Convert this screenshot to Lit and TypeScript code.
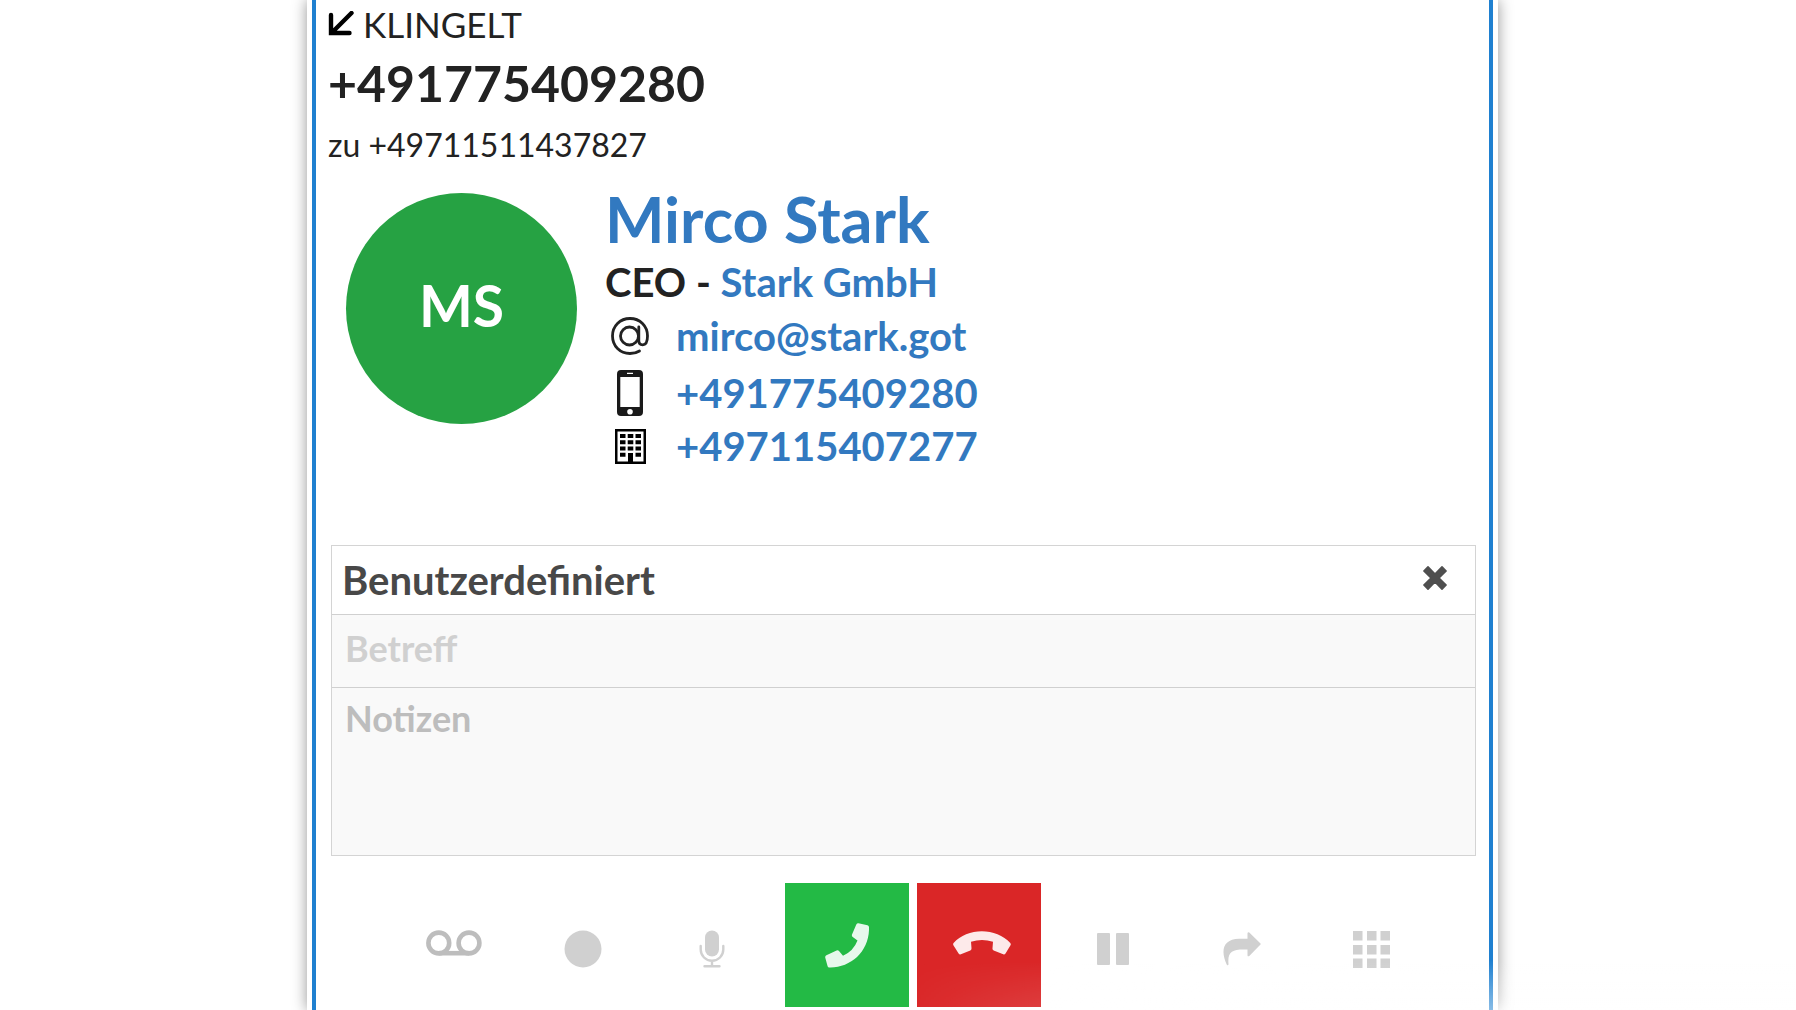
import { LitElement, html, svg, css } from "lit";
import { customElement } from "lit/decorators.js";

const icons = {
  incoming: svg`<svg width="26" height="26" viewBox="0 0 26 26" fill="none" stroke="#000" stroke-width="4.400" stroke-linecap="round"><path d="M23.500 2 4 21.500M3 4V22H21.500" /></svg>`,
  at: svg`<svg width="38" height="38" viewBox="0 0 38 38" fill="none" stroke="#222" stroke-width="2.800" stroke-linecap="round"><circle cx="18.500" cy="19" r="9" /><path d="M27.800 10v13.500c0 2.600 1.400 4.300 3.800 4.300 3 0 4.900-3 4.900-8.800C36.500 9 29 1.500 19 1.500S1.500 9 1.500 19 9 36.500 19 36.500c3.700 0 6.700-.7 9.500-2.500" /></svg>`,
  mobile: svg`<svg width="26" height="46" viewBox="0 0 26 46"><path fill="#1a1a1a" fill-rule="evenodd" d="M4 0h18a4 4 0 0 1 4 4v38a4 4 0 0 1-4 4H4a4 4 0 0 1-4-4V4a4 4 0 0 1 4-4zM3.300 7v30h19.400V7zM10 2.800v1.200h6V2.800zM13 39a2.800 2.800 0 1 0 0 5.600 2.800 2.800 0 0 0 0-5.600z" /></svg>`,
  building: svg`<svg width="31" height="35" viewBox="0 0 31 35"><path fill="#000" fill-rule="evenodd" d="M0 0h31v35H0zM2.500 2.500v30H13V24h5v8.500h10.500v-30z" /><path fill="#000" d="M5 5h5.500v4H5zM12.700 5h5.600v4h-5.600zM20.500 5H26v4h-5.500zM5 11.200h5.500v4H5zM12.700 11.200h5.600v4h-5.600zM20.500 11.200H26v4h-5.500zM5 17.500h5.500v4H5zM12.700 17.500h5.600v4h-5.600zM20.500 17.500H26v4h-5.500zM5 23.700h5.500v4H5zM20.500 23.700H26v4h-5.500z" /></svg>`,
  close: svg`<svg width="24" height="24" viewBox="0 0 24 24" fill="none" stroke="#4f4f4f"><path stroke-width="6" d="M4 4 20 20M20 4 4 20" /><path stroke-width="1.600" stroke-linejoin="round" fill="#4f4f4f" d="M5 .9 12 8 19 .9 23.100 5 16 12l7.100 7L19 23.100 12 16 5 23.100.9 19 8 12 .9 5z" /></svg>`,
  voicemail: svg`<svg width="56" height="26" viewBox="0 0 56 26" fill="none" stroke="#bdbdbd" stroke-width="4.600"><circle cx="12.800" cy="13" r="10.400" /><circle cx="43" cy="13" r="10.400" /><path d="M12.800 23.200H43" /></svg>`,
  record: svg`<svg width="38" height="38" viewBox="0 0 38 38"><circle cx="19" cy="19" r="18.500" /></svg>`,
  mic: svg`<svg width="26" height="38" viewBox="0 0 26 38"><rect x="6" y="0.500" width="14" height="26" rx="7" /><path fill="none" stroke="#d0d0d0" stroke-width="2.400" stroke-linecap="round" d="M1.700 16v3.500a11.300 11.300 0 0 0 22.600 0V16M13 31v5M5.500 36.200h15" /></svg>`,
  answer: svg`<svg width="44" height="45" viewBox="0 0 44 45" fill="#e7f8ec"><path d="M33.400.3 42.500 2.200Q44 2.600 44 4.200C44.800 28 26 45.200 4.200 44.500Q3 44.500 2.600 43.200L.2 34.600Q0 33 1.400 32.300L11.600 27.500Q13 27 14 28L18 32.800Q28.500 28 32.500 17.500L27.700 14Q26.500 12.800 27 11.500L31.300 1.500Q32 .1 33.400.3z" /></svg>`,
  decline: svg`<svg width="58" height="24" viewBox="0 0 58 24" fill="#fdeaea"><path d="M.6 12C14-3.800 43.500-3.800 57.300 12Q58.200 13.100 57.500 14.300L52.500 22.500Q51.600 23.800 50.200 23.300L40.700 19.400Q39.300 18.700 39.500 17.300L40 10.700Q29 7.500 18 10.700L18.500 17.300Q18.600 18.800 17.300 19.400L7.900 23.300Q6.400 23.800 5.600 22.500L.4 14.300Q-.2 13 .6 12z" /></svg>`,
  pause: svg`<svg width="32" height="32" viewBox="0 0 32 32"><rect width="13" height="32" rx="1" /><rect x="19" width="13" height="32" rx="1" /></svg>`,
  forward: svg`<svg width="38" height="34" viewBox="0 0 38 34"><path d="M24.500 1.200Q24.800-.2 26.300.6L37.500 11.500Q38 12 37.500 12.600L26.300 24Q24.800 24.800 24.500 23.400V17.500C10 17 4.300 18.500 5.500 32.300Q5.300 34 3.800 32.700C-3 18 .5 7 16 6.800H24.500z" /></svg>`,
  keypad: svg`<svg width="37" height="37" viewBox="0 0 37 37"><path d="M0 0h9.500v9.500H0zM14 0h9.500v9.500H14zM27.500 0H37v9.500h-9.500zM0 14h9.500v9.500H0zM14 14h9.500v9.500H14zM27.500 14H37v9.500h-9.500zM0 27.500h9.500V37H0zM14 27.500h9.500V37H14zM27.500 27.500H37V37h-9.500z" /></svg>`,
};

@customElement("app-root")
export class AppRoot extends LitElement {
  static styles = css`
    :host {
      display: block;
      min-height: 100vh;
      overflow: hidden;
      background: #fff;
      color: #222;
      font-family: Lato, "Liberation Sans", sans-serif;
    }
    * { box-sizing: border-box; }
    svg { display: block; flex: none; }
    h1, p { margin: 0; }
    a { color: #3279c0; text-decoration: none; }
    button { margin: 0; padding: 0; border: 0; background: none; font: inherit; }
    .page { position: relative; padding: 0 298px 0 307px; }
    .window {
      min-height: 100vh;
      padding: 0 5px;
      background: #fff;
      box-shadow: 0 0 14px rgba(0, 0, 0, 0.42);
    }
    .frame {
      min-height: 100vh;
      padding: 0 13px 0 12px;
      border: solid #1f80d0;
      border-width: 0 4px;
    }
    .state { display: flex; align-items: center; gap: 9px; font-size: 35px; line-height: 48px; }
    .number { font-size: 50px; line-height: 70px; font-weight: 700; }
    .line { font-size: 32px; line-height: 54px; }
    .contact { display: flex; align-items: flex-start; gap: 28px; margin-top: 10px; padding-left: 18px; }
    .avatar {
      display: grid;
      place-items: center;
      flex: none;
      width: 231px;
      height: 231px;
      margin-top: 11px;
      padding-bottom: 7px;
      border-radius: 50%;
      background: #26a243;
      color: #fff;
      font-size: 57px;
      font-weight: 700;
    }
    .name { font-size: 63px; line-height: 74px; font-weight: 700; }
    .role { font-size: 40px; line-height: 52px; font-weight: 700; }
    .ways {
      display: grid;
      grid-template-rows: 56px 58px 48px;
      margin: 0;
      padding: 0;
      list-style: none;
    }
    .way { display: flex; align-items: center; font-size: 40px; line-height: 48px; font-weight: 700; }
    .mark { display: grid; place-items: center; width: 50px; height: 48px; margin-right: 21px; }
    .form { margin: 75px 0 0 3px; border: 1px solid #d4d4d4; }
    .head { display: flex; align-items: center; height: 68px; padding: 0 28px 0 10px; }
    .title { flex: 1; color: #484848; font-size: 40px; font-weight: 700; line-height: 68px; }
    .close { padding-bottom: 4px; }
    .field {
      display: block;
      width: 100%;
      margin: 0;
      padding: 0 13px;
      border: 0;
      border-top: 1px solid #d0d0d0;
      border-radius: 0;
      outline: 0;
      background: #f9f9f9;
      color: #484848;
      font: 700 36px/60px Lato, "Liberation Sans", sans-serif;
      resize: none;
    }
    .subject { height: 73px; padding-bottom: 6px; }
    .notes { height: 168px; }
    .field::placeholder { opacity: 1; color: #bdbdbd; }
    .subject::placeholder { color: #d0d0d0; }
    .bar { display: flex; justify-content: center; margin: 27px 0 0 21px; }
    .tool { display: grid; place-items: center; width: 129px; height: 124px; padding-top: 8px; fill: #d0d0d0; }
    .voicemail { padding: 0 0 4px; }
    .calls { display: flex; gap: 8px; padding: 0 8px; }
    .call { display: grid; place-items: center; width: 124px; height: 124px; }
    .answer { background: #23ba45; }
    .decline { padding-left: 6px; padding-bottom: 4px; background: #da2627; }
    .fade {
      position: absolute;
      right: 0;
      bottom: 0;
      left: 50%;
      height: 50px;
      background: linear-gradient(to bottom, rgba(255, 255, 255, 0), rgba(255, 255, 255, 0.5));
      -webkit-mask-image: linear-gradient(to right, transparent, #000 70%);
      mask-image: linear-gradient(to right, transparent, #000 70%);
      pointer-events: none;
    }
  `;

  private way(icon: unknown, href: string, text: string) {
    return html`<li class="way"><span class="mark">${icon}</span><a href=${href}>${text}</a></li>`;
  }

  private tool(icon: unknown, label: string, extra = "") {
    return html`<button class="tool ${extra}" type="button" aria-label=${label}>${icon}</button>`;
  }

  render() {
    return html`
      <div class="page">
        <main class="window">
          <div class="frame">
            <p class="state">${icons.incoming}<span>KLINGELT</span></p>
            <p class="number">+491775409280</p>
            <p class="line">zu +49711511437827</p>
            <section class="contact">
              <div class="avatar">MS</div>
              <div>
                <h1 class="name"><a href="#contact">Mirco Stark</a></h1>
                <p class="role">CEO - <a href="#company">Stark GmbH</a></p>
                <ul class="ways">
                  ${this.way(icons.at, "mailto:mirco@stark.got", "mirco@stark.got")}
                  ${this.way(icons.mobile, "tel:+491775409280", "+491775409280")}
                  ${this.way(icons.building, "tel:+497115407277", "+497115407277")}
                </ul>
              </div>
            </section>
            <form class="form">
              <div class="head">
                <span class="title">Benutzerdefiniert</span>
                <button class="close" type="button" aria-label="Schließen">${icons.close}</button>
              </div>
              <input class="field subject" type="text" placeholder="Betreff" aria-label="Betreff" />
              <textarea class="field notes" placeholder="Notizen" aria-label="Notizen"></textarea>
            </form>
            <div class="bar">
              ${this.tool(icons.voicemail, "Voicemail", "voicemail")}
              ${this.tool(icons.record, "Aufnehmen")}
              ${this.tool(icons.mic, "Stummschalten")}
              <div class="calls">
                <button class="call answer" type="button" aria-label="Annehmen">${icons.answer}</button>
                <button class="call decline" type="button" aria-label="Ablehnen">${icons.decline}</button>
              </div>
              ${this.tool(icons.pause, "Halten")}
              ${this.tool(icons.forward, "Weiterleiten")}
              ${this.tool(icons.keypad, "Wähltastatur")}
            </div>
          </div>
        </main>
        <div class="fade"></div>
      </div>
    `;
  }
}
